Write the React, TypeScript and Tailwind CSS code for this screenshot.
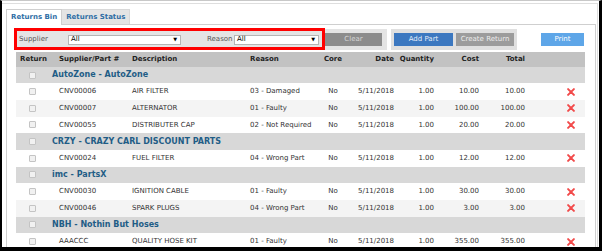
import React from "react";

type Item = [string, string, string, string, string];

const GROUPS: { name: string; items: Item[] }[] = [
  {
    name: "AutoZone - AutoZone",
    items: [
      ["CNV00006", "AIR FILTER", "03 - Damaged", "10.00", "10.00"],
      ["CNV00007", "ALTERNATOR", "01 - Faulty", "100.00", "100.00"],
      ["CNV00055", "DISTRIBUTER CAP", "02 - Not Required", "20.00", "20.00"],
    ],
  },
  {
    name: "CRZY - CRAZY CARL DISCOUNT PARTS",
    items: [["CNV00024", "FUEL FILTER", "04 - Wrong Part", "12.00", "12.00"]],
  },
  {
    name: "imc - PartsX",
    items: [
      ["CNV00030", "IGNITION CABLE", "01 - Faulty", "30.00", "30.00"],
      ["CNV00046", "SPARK PLUGS", "04 - Wrong Part", "3.00", "3.00"],
    ],
  },
  {
    name: "NBH - Nothin But Hoses",
    items: [["AAACCC", "QUALITY HOSE KIT", "01 - Faulty", "355.00", "355.00"]],
  },
];

function Check() {
  return (
    <div className="ml-[13px] h-[7px] w-[7px] rounded-[1px] border border-[#c4c4c4] bg-[#f1f1f1]" />
  );
}

function RemoveIcon() {
  return (
    <svg width="8" height="8" viewBox="0 0 8 8" className="ml-[42px]">
      <path d="M1.1 1.1 L6.9 6.9 M6.9 1.1 L1.1 6.9" stroke="#f24a4a" strokeWidth="2" strokeLinecap="round" />
    </svg>
  );
}

function FakeSelect({ width }: { width: string }) {
  return (
    <div className={`${width} flex h-[10px] items-center justify-between border border-[#b5b5b5] bg-white pl-[2px] pr-[3px] text-[7px] text-black`}>
      <span>All</span>
      <span className="text-[5px]">▼</span>
    </div>
  );
}

// one line of the returns table
function ItemRow({ item, odd }: { item: Item; odd: boolean }) {
  const [part, desc, reason, cost, total] = item;
  return (
    <div className={`flex h-[16.67px] items-center text-[7px] text-[#333] ${odd ? "bg-[#f4f4f4]" : "bg-white"}`}>
      <div className="w-[36px]">
        <Check />
      </div>
      <div className="w-[80px] pl-[7px]">{part}</div>
      <div className="w-[118px]">{desc}</div>
      <div className="w-[68px] whitespace-nowrap">{reason}</div>
      <div className="w-[30px] text-center">No</div>
      <div className="w-[46px] text-right">5/11/2018</div>
      <div className="w-[40px] text-right">1.00</div>
      <div className="w-[45px] text-right">{cost}</div>
      <div className="w-[46px] text-right">{total}</div>
      <div className="flex flex-1 items-center">
        <RemoveIcon />
      </div>
    </div>
  );
}

export default function App() {
  return (
    <div className="relative h-[251px] w-[602px] overflow-hidden border-b-4 border-l-2 border-r-[3px] border-t border-black border-t-[#c8c8c8] bg-white font-['DejaVu_Sans',sans-serif]">
      <div className="mt-[2px] mr-[1px] h-full border-r border-t border-[#dedede] pl-[4px] pt-[4px]">
        {/* tabs */}
        <div className="flex h-[16px] items-end">
          <div className="relative z-10 -mb-px flex h-[16px] items-center border border-b-0 border-[#cfcfcf] bg-white px-[4px] text-[7px] font-bold text-[#2f6ea5]">
            Returns Bin
          </div>
          <div className="flex h-[15px] items-center border-t border-r border-[#d8d8d8] bg-[#e4e4e4] px-[4px] text-[7px] font-bold text-[#2f6ea5]">
            Returns Status
          </div>
        </div>

        {/* panel */}
        <div className="h-full w-[590px] border border-[#cfcfcf] pl-[7px] pt-[4px]">
          {/* toolbar */}
          <div className="flex h-[21px] items-center">
            <div className="flex h-[21px] w-[373px] items-center bg-[#e4e4e4] pl-[5px] text-[7px] text-[#555]">
              <span className="w-[49px]">Supplier</span>
              <FakeSelect width="w-[113px]" />
              <span className="ml-[26px] w-[27px]">Reason</span>
              <FakeSelect width="w-[85px]" />
              <div className="ml-[6px] flex h-[13px] w-[57px] items-center justify-center bg-[#8c8c8c] text-[#d6d6d6]">
                Clear
              </div>
            </div>
            <div className="ml-[4px] flex h-[21px] items-center gap-[3px] bg-[#e0e0e0] px-[3px] text-[7px]">
              <div className="flex h-[13px] w-[59px] items-center justify-center bg-[#3c78c0] text-[#e4eefa]">
                Add Part
              </div>
              <div className="flex h-[13px] w-[58px] items-center justify-center bg-[#9c9c9c] text-[#ececec]">
                Create Return
              </div>
            </div>
            <div className="ml-[24px] flex h-[13px] w-[43px] items-center justify-center bg-[#5ea6e8] text-[7px] text-white">
              Print
            </div>
          </div>

          {/* table */}
          <div className="ml-[2px] mt-[1.7px] w-[569px]">
            <div className="flex h-[15px] items-center bg-[#c2c2c2] text-[7px] font-bold text-[#222]">
              <div className="w-[36px] pl-[4px]">Return</div>
              <div className="w-[80px] pl-[7px]">Supplier/Part #</div>
              <div className="w-[118px]">Description</div>
              <div className="w-[68px]">Reason</div>
              <div className="w-[30px] text-center">Core</div>
              <div className="w-[46px] text-right">Date</div>
              <div className="w-[40px] text-right">Quantity</div>
              <div className="w-[45px] text-right">Cost</div>
              <div className="w-[46px] text-right">Total</div>
              <div className="flex-1" />
            </div>
            {GROUPS.map((group) => (
              <div key={group.name}>
                <div className="flex h-[16.67px] items-center bg-[#d8d8d8]">
                  <div className="w-[36px]">
                    <Check />
                  </div>
                  <div className="text-[8px] font-bold text-[#1f5d86]">{group.name}</div>
                </div>
                {group.items.map((item, i) => (
                  <ItemRow key={item[0]} item={item} odd={i % 2 === 1} />
                ))}
              </div>
            ))}
          </div>
        </div>
      </div>

      {/* highlight annotation */}
      <div className="absolute left-[12px] top-[27px] h-[22px] w-[311px] border-[3px] border-[#ff0000]" />
    </div>
  );
}
